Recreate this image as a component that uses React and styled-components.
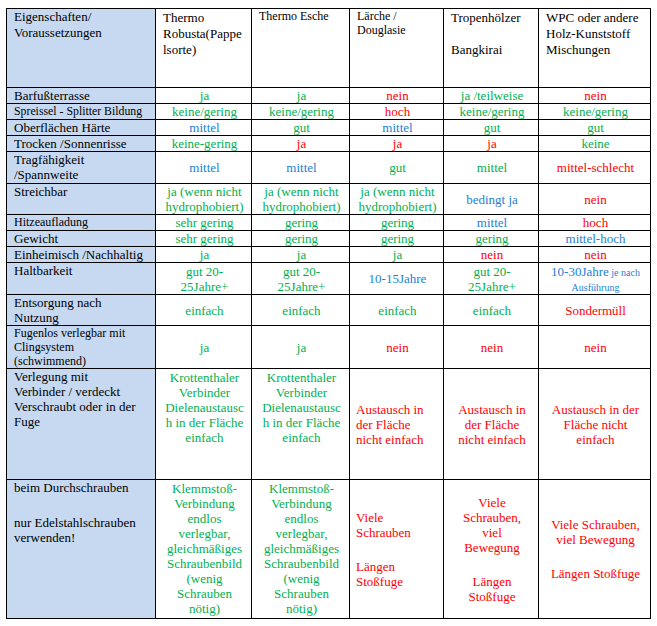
import React from "react";
import styled, { createGlobalStyle } from "styled-components";

const GlobalStyle = createGlobalStyle`
  html, body {
    margin: 0;
    background: #ffffff;
  }
  body, table, th, td {
    font-family: "Liberation Serif", "Times New Roman", serif;
    color: #000000;
  }
`;

const tones = {
  g: "#00b050",
  b: "#1c7fd6",
  r: "#ff0000",
  k: "#000000",
};

const widths = [149, 96, 98, 94, 95, 112];

const header = [
  { lines: ["Eigenschaften/", "Voraussetzungen"], size: 13, blue: true, top: 0 },
  { lines: ["Thermo", "Robusta(Pappe", "lsorte)"], size: 13, top: 1 },
  { lines: ["Thermo Esche"], size: 12, top: 0 },
  { lines: ["Lärche /", "Douglasie"], size: 12, top: 0 },
  { lines: ["Tropenhölzer", "", "Bangkirai"], size: 13, top: 1 },
  { lines: ["WPC oder andere", "Holz-Kunststoff", "Mischungen"], size: 13, top: 1 },
];

const green2 = (a, b) => ({ lines: [a, b], tone: "g" });

const rows = [
  {
    label: ["Barfußterrasse"],
    h: 16,
    cells: [["ja", "g"], ["ja", "g"], ["nein", "r"], ["ja /teilweise", "g"], ["nein", "r"]],
  },
  {
    label: ["Spreissel - Splitter Bildung"],
    labelSize: 11.8,
    h: 16,
    cells: [["keine/gering", "g"], ["keine/gering", "g"], ["hoch", "r"], ["keine/gering", "g"], ["keine/gering", "g"]],
  },
  {
    label: ["Oberflächen Härte"],
    h: 16,
    cells: [["mittel", "b"], ["gut", "g"], ["mittel", "b"], ["gut", "g"], ["gut", "g"]],
  },
  {
    label: ["Trocken /Sonnenrisse"],
    h: 16,
    cells: [["keine-gering", "g"], ["ja", "r"], ["ja", "r"], ["ja", "r"], ["keine", "g"]],
  },
  {
    label: ["Tragfähigkeit", "/Spannweite"],
    h: 32,
    cells: [["mittel", "b"], ["mittel", "b"], ["gut", "g"], ["mittel", "g"], ["mittel-schlecht", "r"]],
  },
  {
    label: ["Streichbar"],
    h: 31,
    cells: [
      green2("ja (wenn nicht", "hydrophobiert)"),
      green2("ja (wenn nicht", "hydrophobiert)"),
      green2("ja (wenn nicht", "hydrophobiert)"),
      ["bedingt ja", "b"],
      ["nein", "r"],
    ],
  },
  {
    label: ["Hitzeaufladung"],
    labelSize: 12,
    h: 16,
    cells: [["sehr gering", "g"], ["gering", "g"], ["gering", "g"], ["mittel", "b"], ["hoch", "r"]],
  },
  {
    label: ["Gewicht"],
    h: 15,
    cells: [["sehr gering", "g"], ["gering", "g"], ["gering", "g"], ["gering", "g"], ["mittel-hoch", "b"]],
  },
  {
    label: ["Einheimisch /Nachhaltig"],
    h: 16,
    cells: [["ja", "g"], ["ja", "g"], ["ja", "g"], ["nein", "r"], ["nein", "r"]],
  },
  {
    label: ["Haltbarkeit"],
    h: 32,
    cells: [
      green2("gut 20-", "25Jahre+"),
      green2("gut 20-", "25Jahre+"),
      ["10-15Jahre", "b"],
      green2("gut 20-", "25Jahre+"),
      { lines: ["10-30Jahre", "Ausführung"], tone: "b", note: " je nach" },
    ],
  },
  {
    label: ["Entsorgung nach", "Nutzung"],
    h: 31,
    cells: [["einfach", "g"], ["einfach", "g"], ["einfach", "g"], ["einfach", "g"], ["Sondermüll", "r"]],
  },
  {
    label: ["Fugenlos verlegbar mit", "Clingsystem", "(schwimmend)"],
    labelSize: 12,
    labelLine: 14,
    h: 42,
    cells: [["ja", "g"], ["ja", "g"], ["nein", "r"], ["nein", "r"], ["nein", "r"]],
  },
  {
    label: ["Verlegung mit", "Verbinder / verdeckt", "Verschraubt oder in der", "Fuge"],
    h: 111,
    cells: [
      { lines: ["Krottenthaler", "Verbinder", "Dielenaustausc", "h in der Fläche", "einfach"], tone: "g", valign: "top" },
      { lines: ["Krottenthaler", "Verbinder", "Dielenaustausc", "h in der Fläche", "einfach"], tone: "g", valign: "top" },
      { lines: ["Austausch in", "der Fläche", "nicht einfach"], tone: "r", align: "left" },
      { lines: ["Austausch in", "der Fläche", "nicht einfach"], tone: "r" },
      { lines: ["Austausch in der", "Fläche nicht", "einfach"], tone: "r" },
    ],
  },
  {
    label: ["beim Durchschrauben", "", "nur Edelstahlschrauben", "verwenden!"],
    h: 139,
    cells: [
      {
        lines: ["Klemmstoß-", "Verbindung", "endlos", "verlegbar,", "gleichmäßiges", "Schraubenbild", "(wenig", "Schrauben", "nötig)"],
        tone: "g",
        valign: "top",
      },
      {
        lines: ["Klemmstoß-", "Verbindung", "endlos", "verlegbar,", "gleichmäßiges", "Schraubenbild", "(wenig", "Schrauben", "nötig)"],
        tone: "g",
        valign: "top",
      },
      { lines: ["Viele", "Schrauben", "", "Längen", "Stoßfuge"], tone: "r", align: "left" },
      { lines: ["Viele", "Schrauben,", "viel", "Bewegung", "", "Längen", "Stoßfuge"], tone: "r" },
      { lines: ["Viele Schrauben,", "viel Bewegung", "", "Längen Stoßfuge"], tone: "r" },
    ],
  },
];

const Page = styled.div`
  padding: 8px 0 0 6px;
`;

const Sheet = styled.table`
  border-collapse: collapse;
  table-layout: fixed;
  width: ${widths.reduce((a, b) => a + b, 0)}px;
  font-family: "Liberation Serif", "Times New Roman", serif;
`;

const Col = styled.col`
  width: ${(p) => p.$w}px;
`;

const Row = styled.tr`
  height: ${(p) => p.$h}px;
`;

const HeadCell = styled.th`
  border: 1px solid #000;
  height: 77px;
  padding: ${(p) => p.$top ?? 1}px 6px 0 7px;
  vertical-align: top;
  text-align: left;
  font-weight: normal;
  font-size: ${(p) => p.$size}px;
  line-height: ${(p) => (p.$size === 12 ? 14 : 16)}px;
  background: ${(p) => (p.$blue ? "#c6d9f1" : "#ffffff")};
  color: #000;
`;

const LabelCell = styled.td`
  border: 1px solid #000;
  background: #c6d9f1;
  padding: 0 4px 0 7px;
  vertical-align: top;
  font-size: ${(p) => p.$size}px;
  line-height: ${(p) => p.$line}px;
  white-space: nowrap;
  overflow: hidden;
`;

const ValueCell = styled.td`
  border: 1px solid #000;
  padding: ${(p) => (p.$valign === "top" ? "1px" : "0")} 4px 0 6px;
  vertical-align: ${(p) => p.$valign};
  text-align: ${(p) => p.$align};
  color: ${(p) => tones[p.$tone]};
  font-size: 13px;
  line-height: 15px;
  white-space: nowrap;
`;

const Line = styled.span`
  display: block;
`;

const Blank = styled.span`
  display: block;
  height: ${(p) => p.$h}px;
`;

const Note = styled.span`
  font-size: 10px;
  line-height: 13px;
`;

function Lines({ lines, blank = 19 }) {
  return lines.map((t, i) => (t === "" ? <Blank key={i} $h={blank} /> : <Line key={i}>{t}</Line>));
}

function Value({ cell }) {
  const c = Array.isArray(cell) ? { lines: [cell[0]], tone: cell[1] } : cell;
  if (c.note) {
    return (
      <ValueCell $tone={c.tone} $align="center" $valign="middle">
        <Line>
          {c.lines[0]}
          <Note>{c.note}</Note>
        </Line>
        <Line>
          <Note>{c.lines[1]}</Note>
        </Line>
      </ValueCell>
    );
  }
  return (
    <ValueCell $tone={c.tone} $align={c.align || "center"} $valign={c.valign || "middle"}>
      <Lines lines={c.lines} />
    </ValueCell>
  );
}

export default function App() {
  return (
    <>
      <GlobalStyle />
      <Page>
        <Sheet>
          <colgroup>
            {widths.map((w, i) => (
              <Col key={i} $w={w} />
            ))}
          </colgroup>
          <thead>
            <tr>
              {header.map((h, i) => (
                <HeadCell key={i} $size={h.size} $blue={h.blue} $top={h.top}>
                  <Lines lines={h.lines} blank={16} />
                </HeadCell>
              ))}
            </tr>
          </thead>
          <tbody>
            {rows.map((r, i) => (
              <Row key={i} $h={r.h}>
                <LabelCell $size={r.labelSize || 13} $line={r.labelLine || 15}>
                  <Lines lines={r.label} blank={20} />
                </LabelCell>
                {r.cells.map((c, j) => (
                  <Value key={j} cell={c} />
                ))}
              </Row>
            ))}
          </tbody>
        </Sheet>
      </Page>
    </>
  );
}
